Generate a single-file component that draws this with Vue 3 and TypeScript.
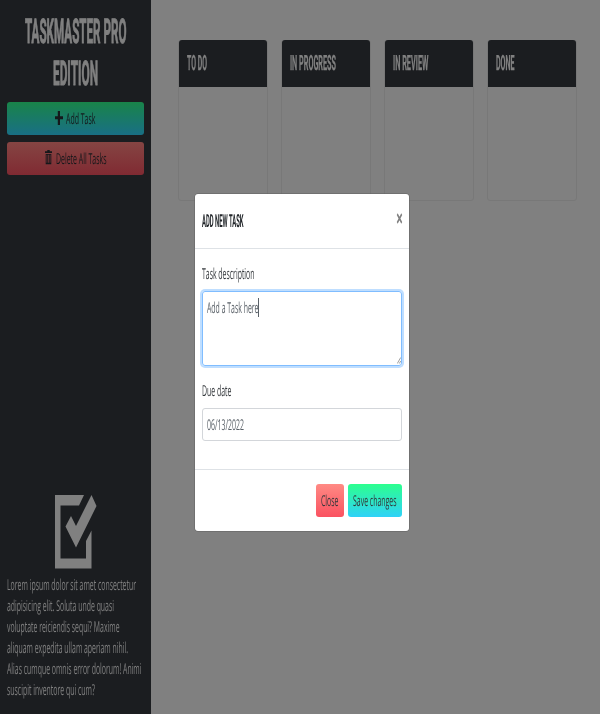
<script setup lang="ts">
import { h, type FunctionalComponent } from 'vue'

interface FitProps {
  text: string
  width: number
  height?: number
  base?: number
}

// A single line of text condensed to an exact width.
const FitText: FunctionalComponent<FitProps> = (p) => {
  const height = p.height ?? 21
  return h('svg', { class: 'fit', width: p.width, height }, [
    h('text', { x: 0, y: p.base ?? 15.5, textLength: p.width, lengthAdjust: 'spacingAndGlyphs' }, p.text),
  ])
}
FitText.props = ['text', 'width', 'height', 'base']

const columns = [
  { title: 'TO DO', width: 20 },
  { title: 'IN PROGRESS', width: 46 },
  { title: 'IN REVIEW', width: 35.5 },
  { title: 'DONE', width: 18.5 },
]

const blurb = [
  { text: 'Lorem ipsum dolor sit amet consectetur', width: 129 },
  { text: 'adipisicing elit. Soluta unde quasi', width: 107 },
  { text: 'voluptate reiciendis sequi? Maxime', width: 112.5 },
  { text: 'aliquam expedita ullam aperiam nihil.', width: 121 },
  { text: 'Alias cumque omnis error dolorum! Animi', width: 134.5 },
  { text: 'suscipit inventore qui cum?', width: 88 },
]
</script>

<template>
  <div class="page">
    <aside class="sidebar">
      <h1 class="brand">
        <FitText text="TASKMASTER PRO" :width="101.5" :height="42" :base="33" />
        <FitText text="EDITION" :width="45" :height="42" :base="33" />
      </h1>
      <button class="side-btn add">
        <svg class="plus" width="8" height="14" viewBox="0 0 8 14"><path d="M2.800 0h2.200v5.300H8v2.900H5V14H2.800V8.200H0V5.300h2.800z" /></svg>
        <FitText text="Add Task" :width="29.5" />
      </button>
      <button class="side-btn delete">
        <svg class="trash" width="7" height="15" viewBox="0 0 7 15">
          <path d="M2.300 0h2.400v1.300H7v1.800H0V1.300h2.300zM.7 4h5.600v10.200H.7zM1.600 4.800v7.900h.7V4.800zm1.550 0v7.900h.7V4.800zm1.550 0v7.900h.7V4.800z" fill-rule="evenodd" />
        </svg>
        <FitText text="Delete All Tasks" :width="50.5" />
      </button>
      <div class="about">
        <svg class="logo" width="42" height="74" viewBox="0 0 42 74">
          <path d="M0 0H29L24 10.500H5.500V63.500H31V46L36.500 35.500V73.500H0z" />
          <path d="M10.500 31.500L16 21L21 31L36.500 0L41.500 11L21 52.500z" />
        </svg>
        <p class="blurb">
          <FitText v-for="line in blurb" :key="line.text" :text="line.text" :width="line.width" />
        </p>
      </div>
    </aside>

    <main class="board">
      <section v-for="col in columns" :key="col.title" class="column">
        <h2><FitText :text="col.title" :width="col.width" :height="30" :base="22.500" /></h2>
      </section>
    </main>

    <div class="modal" role="dialog">
      <header class="modal-head">
        <FitText text="ADD NEW TASK" :width="41.500" :height="26" :base="19" />
        <button class="dismiss"><FitText text="×" :width="7" :height="24" :base="19" /></button>
      </header>
      <div class="modal-body">
        <FitText class="label" text="Task description" :width="52.500" />
        <div class="textarea">
          <FitText text="Add a Task here" :width="51.500" />
          <i class="caret"></i>
          <svg class="grip" width="4" height="7" viewBox="0 0 4 7"><path d="M.3 6.500L3.700.5M2.300 6.500L3.700 4" /></svg>
        </div>
        <FitText class="label due" text="Due date" :width="29.500" />
        <div class="input"><FitText text="06/13/2022" :width="37" /></div>
      </div>
      <footer class="modal-foot">
        <button class="btn close"><FitText text="Close" :width="17.500" /></button>
        <button class="btn save"><FitText text="Save changes" :width="43.500" /></button>
      </footer>
    </div>
  </div>
</template>

<style>
body {
  margin: 0;
  background: #808080;
}
.fit {
  display: block;
  flex: none;
  overflow: visible;
  fill: currentColor;
  text-rendering: geometricPrecision;
  will-change: transform;
}
</style>

<style scoped>
.page {
  position: relative;
  display: flex;
  width: 600px;
  height: 714px;
  overflow: hidden;
  background: #808080;
  font-family: 'Open Sans', sans-serif;
  font-size: 15px;
  font-weight: 400;
  box-sizing: border-box;
}
.page *,
.page *::before {
  box-sizing: border-box;
}
button {
  font: inherit;
  border: 0;
  padding: 0;
  display: flex;
  align-items: center;
  justify-content: center;
}
h1,
h2,
p {
  margin: 0;
}
.sidebar {
  width: 151px;
  flex: none;
  display: flex;
  flex-direction: column;
  padding: 10px 7px 14px;
  background: #1b1d20;
  color: #808080;
}
.brand {
  display: flex;
  flex-direction: column;
  align-items: center;
  margin-bottom: 8px;
  font: 700 34px Roboto, sans-serif;
  stroke: #808080;
  stroke-width: 1px;
}
.side-btn {
  height: 33px;
  width: 137px;
  flex: none;
  border-radius: 3px;
  color: #15181b;
  gap: 3px;
}
.plus,
.trash {
  fill: #15181b;
  position: relative;
  top: -1px;
}
.add {
  background: linear-gradient(#198449, #196f85);
}
.delete {
  margin-top: 7px;
  background: linear-gradient(#854543, #802a32);
  gap: 3.500px;
}
.about {
  margin-top: auto;
}
.logo {
  display: block;
  margin: 0 0 5px 48px;
  fill: #808080;
}
.blurb {
  display: flex;
  flex-direction: column;
}
.board {
  flex: 1;
  display: grid;
  grid-template-columns: repeat(4, 89.500px);
  column-gap: 13.400px;
  align-content: start;
  padding: 40px 0 0 27.400px;
}
.column {
  height: 161px;
  border: 1px solid #787878;
  border-radius: 3px;
}
.column h2 {
  height: 47px;
  margin: -1px -0.500px 0;
  padding: 7px 0 0 8.500px;
  border-radius: 3px 3px 0 0;
  background: #1b1d20;
  color: #808080;
  font: 700 21px Roboto, sans-serif;
  stroke: #808080;
  stroke-width: 0.300px;
}
.modal {
  position: absolute;
  left: 195px;
  top: 194px;
  width: 214px;
  height: 337px;
  background: #fff;
  border-radius: 3px;
  box-shadow: 0 0 0 0.500px #606060;
  color: #33373b;
  display: flex;
  flex-direction: column;
}
.modal-head {
  height: 55px;
  padding: 14px 6.500px 0;
  display: flex;
  justify-content: space-between;
  align-items: flex-start;
  border-bottom: 1px solid #dee2e6;
  color: #212529;
  font: 700 18px Roboto, sans-serif;
}
.dismiss {
  background: none;
  color: #808080;
  font: 700 24px 'Open Sans', sans-serif;
}
.modal-body {
  flex: 1;
  padding: 14px 6.600px 0 6.500px;
}
.textarea {
  display: flex;
  position: relative;
  height: 75px;
  margin-top: 7px;
  padding: 5px 4.400px;
  border: 1px solid #80bdff;
  border-radius: 3px;
  box-shadow: 0 0 0 2px #bfdeff;
  color: #5a6168;
}
.caret {
  width: 1px;
  height: 19px;
  margin-top: 1px;
  background: #5a6168;
}
.grip {
  position: absolute;
  right: 0;
  bottom: 1px;
  stroke: #777;
  stroke-width: 0.700;
  fill: none;
}
.due {
  margin-top: 14px;
}
.input {
  height: 33px;
  margin-top: 7px;
  padding: 5px 4.400px;
  border: 1px solid #d3d6da;
  border-radius: 3px;
  color: #5a6168;
}
.modal-foot {
  height: 62px;
  display: flex;
  justify-content: flex-end;
  gap: 3.500px;
  padding: 14px 6.600px 0;
  border-top: 1px solid #dee2e6;
}
.btn {
  height: 33px;
  padding: 0 5.500px;
  border-radius: 3px;
  color: #33373b;
}
.close {
  background: linear-gradient(#ff8a84, #fa5261);
}
.save {
  background: linear-gradient(#2cff8e, #2fd2f8);
}
</style>
